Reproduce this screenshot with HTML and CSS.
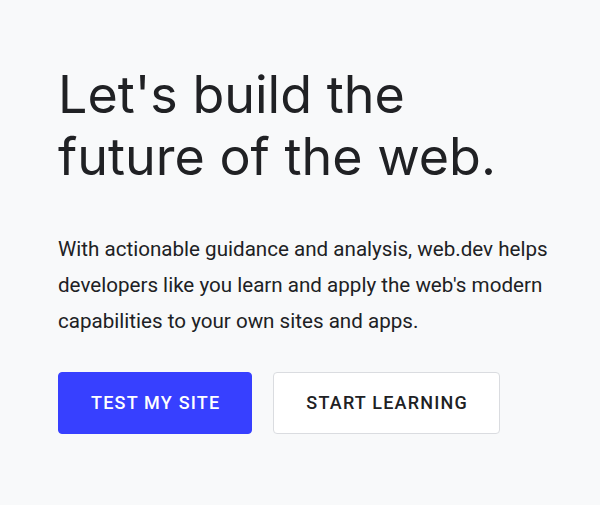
FILE: index.html
```html
<!DOCTYPE html>
<html lang="en">
<head>
    <meta charset="UTF-8">
    <title>web.dev</title>
    <link rel="stylesheet" href="styles.css">
</head>
<body>
    <main class="hero">
        <h1 class="hero-title">Let's build the future of the web.</h1>
        <p class="hero-text">With actionable guidance and analysis, web.dev helps developers like you learn and apply the web's modern capabilities to your own sites and apps.</p>
        <div class="hero-actions">
            <a class="btn btn-primary" href="#">Test my site</a>
            <a class="btn btn-secondary" href="#">Start learning</a>
        </div>
    </main>
</body>
</html>
```

FILE: styles.css
```css
*{
    margin: 0;
    padding: 0;
    box-sizing: border-box;
}
html, body{
    background-color: #f8f9fa;
}
body{
    font-family: Roboto, "Liberation Sans", sans-serif;
    color: #202124;
}
.hero{
    padding: 64px 0 0 58px;
}
.hero-title{
    max-width: 460px;
    font-family: Inter, "Noto Sans", sans-serif;
    font-size: 52px;
    font-weight: 400;
    line-height: 62px;
    color: #202124;
}
.hero-text{
    max-width: 510px;
    margin-top: 43px;
    font-size: 20.6px;
    line-height: 36px;
    color: #202124;
}
.hero-actions{
    display: flex;
    gap: 21px;
    margin-top: 33px;
}
.btn{
    display: block;
    padding: 19px 31px 19px 32px;
    border: 1px solid transparent;
    border-radius: 4px;
    font-size: 18px;
    font-weight: 500;
    line-height: 22px;
    letter-spacing: 1.2px;
    text-transform: uppercase;
    text-decoration: none;
}
.btn-primary{
    background-color: #3740ff;
    border-color: #3740ff;
    color: #fff;
}
.btn-secondary{
    background-color: #fff;
    border-color: #dadce0;
    color: #202124;
}
```
